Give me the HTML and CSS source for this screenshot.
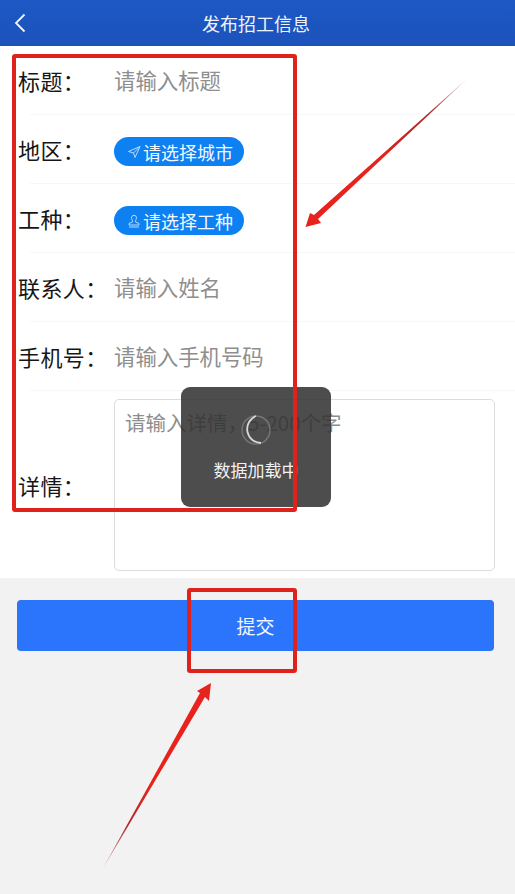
FILE: index.html
```html
<!DOCTYPE html>
<html lang="zh">
<head>
<meta charset="utf-8">
<title>发布招工信息</title>
<link rel="stylesheet" href="styles.css">
</head>
<body>
<div class="page">
  <header class="topbar">
    <svg class="back" viewBox="0 0 14 20" width="14" height="20"><path d="M11.5 1.5 L3 10 L11.5 18.5" fill="none" stroke="#f2f6fd" stroke-width="1.8"/></svg>
    <h1 class="title">发布招工信息</h1>
  </header>
  <main class="form">
    <div class="row"><span class="label">标题：</span><span class="hint">请输入标题</span></div>
    <div class="row"><span class="label">地区：</span>
      <span class="pill">
        <svg class="pill-icon" viewBox="0 0 14 14" width="14" height="14"><path d="M13 1.5 L1.5 6.5 L6.5 8 L8 12.5 Z M13 1.5 L6.5 8" fill="none" stroke="#b9dbff" stroke-width="1"/></svg>
        请选择城市</span></div>
    <div class="row"><span class="label">工种：</span>
      <span class="pill">
        <svg class="pill-icon" viewBox="0 0 14 14" width="14" height="14"><path d="M5.5 8 C5.5 6 4.5 5 4.5 3.8 A2.5 2.5 0 0 1 9.5 3.8 C9.5 5 8.5 6 8.5 8 L12 9.5 V11 H2 V9.5 Z M2 13 H12" fill="none" stroke="#b9dbff" stroke-width="1"/></svg>
        请选择工种</span></div>
    <div class="row"><span class="label">联系人：</span><span class="hint">请输入姓名</span></div>
    <div class="row"><span class="label">手机号：</span><span class="hint">请输入手机号码</span></div>
    <div class="row row-detail"><span class="label">详情：</span>
      <div class="detail-box">请输入详情，5-200个字</div></div>
  </main>
  <div class="actions"><button class="submit" type="button">提交</button></div>

  <div class="toast">
    <svg class="spinner" viewBox="0 0 32 32" width="32" height="32"><circle cx="16" cy="16" r="14" fill="none" stroke="#777" stroke-width="1.4"/><path d="M21 29 A14 14 0 0 1 16 2" fill="none" stroke="#d8d8d8" stroke-width="1.8"/></svg>
    <span class="toast-text">数据加载中</span>
  </div>

  <div class="mark mark-form"></div>
  <div class="mark mark-submit"></div>

  <svg class="arrows" viewBox="0 0 515 894" width="515" height="894">
    <defs>
      <linearGradient id="tail-one" gradientUnits="userSpaceOnUse" x1="468" y1="78" x2="380" y2="158">
        <stop offset="0" stop-color="#d9c4c4"/><stop offset="0.45" stop-color="#a5282a"/><stop offset="1" stop-color="#e8221c"/>
      </linearGradient>
      <linearGradient id="tail-two" gradientUnits="userSpaceOnUse" x1="102" y1="870" x2="150" y2="785">
        <stop offset="0" stop-color="#d9c4c4"/><stop offset="0.5" stop-color="#b02a30"/><stop offset="1" stop-color="#e8221c"/>
      </linearGradient>
    </defs>
    <path d="M468 78 L318 219 L321 223 L305.500 227 L310 213 L314 215 Z" fill="url(#tail-one)"/>
    <path d="M102 870 L205 697 L209 701 L211 683 L197 691 L200 693 Z" fill="url(#tail-two)"/>
  </svg>
</div>
</body>
</html>
```
FILE: styles.css
```css
* { box-sizing: border-box; }
html, body { margin: 0; padding: 0; }
body {
  background: #f2f2f2;
  font-family: "Noto Sans CJK SC", "Noto Sans", sans-serif;
}
.page {
  position: relative;
  width: 515px;
  height: 894px;
  overflow: hidden;
}
.topbar {
  position: relative;
  height: 46px;
  background: linear-gradient(#1d58c4, #1c52bb);
  display: flex;
  align-items: center;
  justify-content: center;
  padding-right: 3px;
}
.back { position: absolute; left: 13px; top: 13px; }
.title {
  margin: 0;
  font-size: 18px;
  font-weight: 400;
  color: #eef3fc;
}
.form { background: #fff; height: 532px; display: flex; flex-direction: column; }
.row {
  height: 69px;
  flex: none;
  display: flex;
  align-items: center;
  padding-left: 18px;
  padding-bottom: 2px;
  position: relative;
}
.row::after {
  content: "";
  position: absolute;
  left: 30px;
  right: 0;
  bottom: 0;
  height: 1px;
  background: #f7f7f7;
}
.row-detail { height: 187px; padding-bottom: 0; }
.row-detail::after { display: none; }
.label {
  width: 96px;
  flex: none;
  font-size: 22px;
  letter-spacing: 0.4px;
  color: #161616;
  white-space: nowrap;
}
.hint { font-size: 21.4px; color: #8e8e8e; }
.pill {
  width: 130px;
  height: 29px;
  margin-top: 6px;
  border-radius: 15px;
  background: #0d80f2;
  color: #f2f8ff;
  font-size: 18px;
  display: flex;
  align-items: center;
  padding-left: 13px;
  gap: 2px;
}
.pill-icon { flex: none; }
.detail-box {
  width: 381px;
  height: 172px;
  margin-top: 1px;
  border: 1px solid #dcdcdc;
  border-radius: 5px;
  padding: 7px 10px;
  font-size: 20.500px;
  color: #8e8e8e;
}
.actions { padding: 22px 21px 0 17px; }
.submit {
  display: block;
  width: 477px;
  height: 51px;
  border: 0;
  border-radius: 4px;
  background: #2a75fb;
  color: #f0f5ff;
  font: 400 19px "Noto Sans CJK SC", "Noto Sans", sans-serif;
}
.toast {
  position: absolute;
  left: 181px;
  top: 387px;
  width: 150px;
  height: 120px;
  border-radius: 9px;
  background: rgba(50, 50, 50, 0.87);
  display: flex;
  flex-direction: column;
  align-items: center;
}
.spinner { margin-top: 27px; margin-left: -1px; }
.toast-text { margin-top: 12px; font-size: 17px; color: #f2f2f2; line-height: 24px; }
.mark {
  position: absolute;
  border: 4px solid #e0221c;
  border-radius: 3px;
}
.mark-form { left: 12px; top: 54px; width: 285px; height: 458px; }
.mark-submit { left: 187px; top: 588px; width: 110px; height: 85px; }
.arrows { position: absolute; left: 0; top: 0; pointer-events: none; }
```
